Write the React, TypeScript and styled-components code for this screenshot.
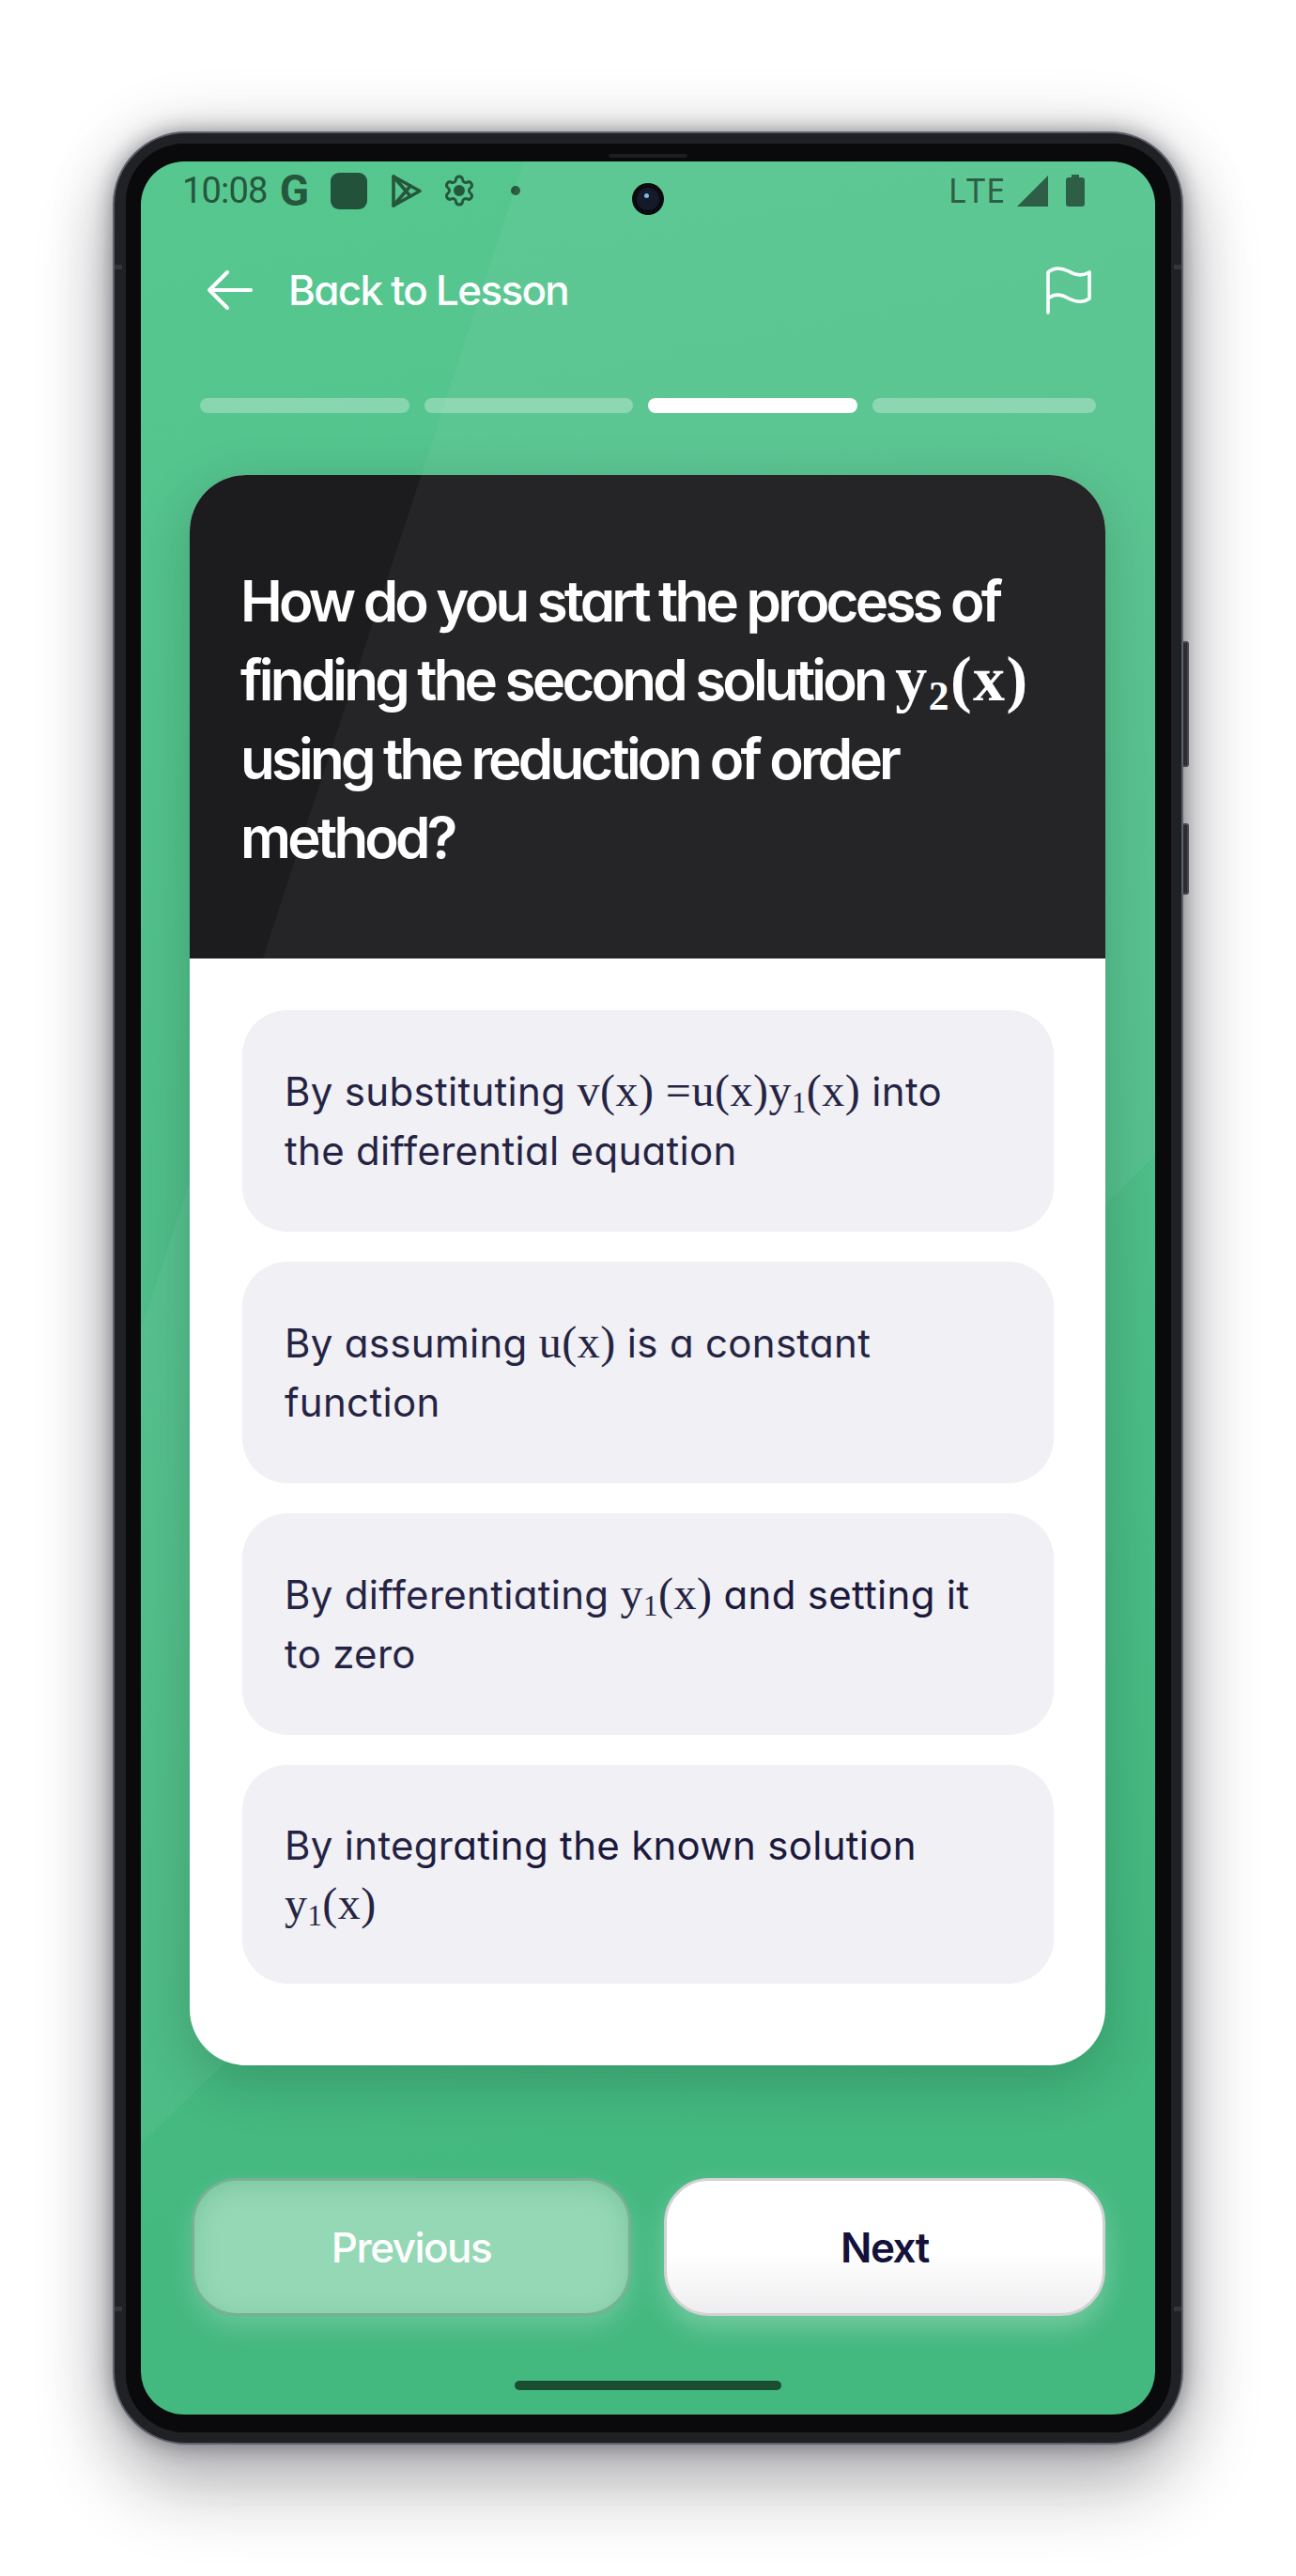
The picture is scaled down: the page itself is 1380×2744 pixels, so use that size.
import React from "react";
import styled, { createGlobalStyle } from "styled-components";
import { Settings } from "lucide-react";

const GlobalStyle = createGlobalStyle`
  html, body {
    margin: 0;
    padding: 0;
    background: #fff;
  }
  * {
    box-sizing: border-box;
  }
`;

const Page = styled.div`
  width: 1380px;
  height: 2744px;
  padding: 140px 120px 0;
  background: #fff;
  font-family: Inter, Lato, "Liberation Sans", sans-serif;
  font-feature-settings: "cv11" 1;
  overflow: hidden;
`;

const Phone = styled.div`
  position: relative;
  width: 1140px;
  height: 2464px;
  padding: 11px 11px 11px 12px;
  border-radius: 78px;
  background: #202125;
  border: 2px solid #5d606c;
  box-shadow: 0 0 22px rgba(20, 20, 30, 0.42), 0 0 70px rgba(20, 20, 30, 0.16), 0 44px 80px rgba(20, 20, 30, 0.3);
`;

const SideKey = styled.div<{ $top: number; $height: number }>`
  position: absolute;
  right: -8px;
  top: ${({ $top }) => $top}px;
  width: 6px;
  height: ${({ $height }) => $height}px;
  background: #2c2d33;
  border: 2px solid #45464f;
  border-left: none;
  border-radius: 0 3px 3px 0;
`;

const AntennaBand = styled.div<{ $side: "left" | "right"; $top: number }>`
  position: absolute;
  ${({ $side }) => $side}: 0;
  top: ${({ $top }) => $top}px;
  width: 8px;
  height: 5px;
  background: #34353b;
`;

const Bezel = styled.div`
  width: 100%;
  height: 100%;
  padding: 19px 17px 19px 16px;
  border-radius: 62px;
  background: #0a0a0c;
  position: relative;
`;

const Speaker = styled.div`
  position: absolute;
  top: 11px;
  left: 514px;
  width: 84px;
  height: 4px;
  border-radius: 2px;
  background: #1d1e22;
`;

const Screen = styled.div`
  position: relative;
  display: flex;
  flex-direction: column;
  width: 1080px;
  height: 2400px;
  border-radius: 46px;
  overflow: hidden;
  background: linear-gradient(168deg, #57c790 0%, #50bf8a 45%, #43b87f 85%);
`;

const Glare = styled.div`
  position: absolute;
  inset: 0;
  z-index: 3;
  pointer-events: none;
  background: rgba(255, 255, 255, 0.045);
  clip-path: polygon(408px 0, 1080px 0, 1080px 1059px, 0 2112px, 0 1245px);
`;

const StatusBar = styled.div`
  display: flex;
  align-items: center;
  height: 62px;
  padding: 0 75px 0 44px;
  color: #25573d;
`;

const Clock = styled.span`
  font-family: Roboto, sans-serif;
  font-size: 38px;
  font-weight: 400;
  letter-spacing: -0.8px;
  line-height: 1;
`;

const GoogleMark = styled.span`
  margin-left: 13px;
  font-family: Roboto, sans-serif;
  font-size: 46px;
  font-weight: 700;
  line-height: 1;
  width: 32px;
`;

const AppSquare = styled.div`
  margin-left: 22px;
  width: 39px;
  height: 39px;
  border-radius: 9px;
  background: #225239;
`;

const PlayIcon = styled.svg`
  margin-left: 25px;
  width: 34px;
  height: 37px;
`;

const GearIcon = styled(Settings)`
  margin-left: 21px;
  width: 36px;
  height: 36px;
  circle {
    fill: currentColor;
  }
`;

const NotifDot = styled.div`
  margin-left: 37px;
  width: 10px;
  height: 10px;
  border-radius: 50%;
  background: #25573d;
`;

const StatusRight = styled.div`
  display: flex;
  align-items: center;
  margin-left: auto;
`;

const Lte = styled.span`
  font-family: "Noto Sans", sans-serif;
  font-size: 36px;
  font-weight: 400;
  line-height: 1;
  letter-spacing: 1px;
`;

const SignalIcon = styled.svg`
  margin-left: 12px;
  width: 33px;
  height: 33px;
`;

const BatteryIcon = styled.svg`
  margin-left: 19px;
  width: 20px;
  height: 34px;
`;

const Camera = styled.div`
  position: absolute;
  left: 523px;
  top: 23px;
  width: 34px;
  height: 34px;
  border-radius: 50%;
  background: #0a0a10;
  display: flex;
  align-items: center;
  justify-content: center;
  z-index: 4;
`;

const CameraLens = styled.div`
  position: relative;
  width: 24px;
  height: 24px;
  border-radius: 50%;
  background: #141a2a;
`;

const CameraGlint = styled.div`
  position: absolute;
  left: 8px;
  top: 6px;
  width: 5px;
  height: 5px;
  border-radius: 50%;
  background: #7db8ec;
`;

const Header = styled.div`
  display: flex;
  align-items: center;
  height: 150px;
  padding: 0 67px 0 71px;
`;

const BackArrow = styled.svg`
  width: 48px;
  height: 42px;
`;

const BackText = styled.span`
  margin-left: 38px;
  color: #fff;
  font-size: 44px;
  font-weight: 500;
  letter-spacing: -1.7px;
  line-height: 1;
`;

const FlagIcon = styled.svg`
  margin-left: auto;
  width: 50px;
  height: 52px;
`;

const Progress = styled.div`
  display: grid;
  grid-template-columns: 223px 222px 223px 238px;
  column-gap: 16px;
  margin: 40px 0 0 63px;
`;

const ProgressSegment = styled.div<{ $active?: boolean }>`
  height: 16px;
  border-radius: 8px;
  background: ${({ $active }) => ($active ? "#fff" : "rgba(255, 255, 255, 0.3)")};
`;

const Card = styled.div`
  height: 1694px;
  margin: 66px 53px 0 52px;
  border-radius: 60px;
  overflow: hidden;
  background: #fff;
  box-shadow: 0 16px 60px rgba(0, 20, 10, 0.2);
`;

const Question = styled.div`
  height: 515px;
  padding: 92px 40px 0 54px;
  background: #1c1c1e;
`;

const QuestionText = styled.h1`
  margin: 0;
  color: #fff;
  font-size: 60px;
  font-weight: 600;
  line-height: 84px;
  letter-spacing: -3.8px;
  white-space: nowrap;
`;

const QuestionMath = styled.span`
  font-family: "Liberation Serif", serif;
  font-weight: 700;
  font-size: 68px;
  letter-spacing: 1.5px;
  line-height: 0;
`;

const Options = styled.div`
  display: flex;
  flex-direction: column;
  gap: 32px;
  padding: 55px 55px 0 56px;
`;

const Option = styled.div<{ $compact?: boolean }>`
  display: flex;
  align-items: center;
  height: ${({ $compact }) => ($compact ? 233 : 236)}px;
  padding: 0 45px;
  border-radius: 48px;
  background: #f0f0f5;
  color: #1c1a3c;
  font-size: 42px;
  line-height: 63px;
  letter-spacing: 0.3px;
  white-space: nowrap;
`;

const MathText = styled.span`
  font-family: "Liberation Serif", serif;
  font-size: 48px;
  line-height: 0;
  letter-spacing: 0.5px;
`;

const Sub = styled.sub`
  font-size: 0.64em;
  line-height: 0;
  vertical-align: -0.22em;
`;

const Actions = styled.div`
  display: grid;
  grid-template-columns: 468px 470px;
  column-gap: 35px;
  margin: 120px 0 0 54px;
`;

const ActionButton = styled.button<{ $primary?: boolean }>`
  height: 147px;
  border-radius: 48px;
  font-family: inherit;
  font-feature-settings: inherit;
  font-size: 44px;
  font-weight: ${({ $primary }) => ($primary ? 600 : 500)};
  letter-spacing: -1.5px;
  color: ${({ $primary }) => ($primary ? "#14123a" : "#fff")};
  border: 3px solid ${({ $primary }) => ($primary ? "#d2d2d2" : "rgba(100, 150, 125, 0.6)")};
  background: ${({ $primary }) =>
    $primary ? "linear-gradient(180deg, #fff 55%, #eeeef0 100%)" : "#95d8b5"};
  box-shadow: ${({ $primary }) =>
    $primary
      ? "0 12px 30px rgba(255, 255, 255, 0.28)"
      : "0 12px 30px rgba(255, 255, 255, 0.2), inset 0 6px 24px rgba(70, 170, 120, 0.35)"};
`;

const HomeBar = styled.div`
  align-self: center;
  width: 284px;
  height: 10px;
  margin-top: 69px;
  border-radius: 5px;
  background: #1b4d33;
`;

export default function App() {
  return (
    <>
      <GlobalStyle />
      <Page>
        <Phone>
          <SideKey $top={541} $height={134} />
          <SideKey $top={735} $height={76} />
          <AntennaBand $side="left" $top={140} />
          <AntennaBand $side="right" $top={140} />
          <AntennaBand $side="left" $top={2315} />
          <AntennaBand $side="right" $top={2315} />
          <Bezel>
            <Speaker />
            <Screen>
              <Glare />
              <Camera>
                <CameraLens>
                  <CameraGlint />
                </CameraLens>
              </Camera>
              <StatusBar>
                <Clock>10:08</Clock>
                <GoogleMark>G</GoogleMark>
                <AppSquare />
                <PlayIcon viewBox="0 0 34 37" fill="none" stroke="currentColor" strokeWidth="3.6" strokeLinejoin="round" strokeLinecap="round">
                  <path d="M3 3 L31 18.5 L3 34 Z" />
                  <path d="M3 3 L21 24 M3 34 L21 13" />
                </PlayIcon>
                <GearIcon />
                <NotifDot />
                <StatusRight>
                  <Lte>LTE</Lte>
                  <SignalIcon viewBox="0 0 33 33">
                    <polygon points="33,0 33,33 0,33" fill="currentColor" />
                  </SignalIcon>
                  <BatteryIcon viewBox="0 0 20 34">
                    <path d="M6 0 H14 V3 H17 Q20 3 20 6 V31 Q20 34 17 34 H3 Q0 34 0 31 V6 Q0 3 3 3 H6 Z" fill="currentColor" />
                  </BatteryIcon>
                </StatusRight>
              </StatusBar>
              <Header>
                <BackArrow viewBox="0 0 48 42" fill="none" stroke="#fff" strokeWidth="4" strokeLinecap="round" strokeLinejoin="round">
                  <path d="M46 21 H2 M21 2 L2 21 L21 40" />
                </BackArrow>
                <BackText>Back to Lesson</BackText>
                <FlagIcon viewBox="0 0 50 52" fill="none" stroke="#fff" strokeWidth="3.6" strokeLinecap="round" strokeLinejoin="round">
                  <path d="M3 50 V7 C9 2 17 2 25 6 C33 11 40 11 47 7 V35 C40 40 33 39 25 35 C17 30 9 30 3 35" />
                </FlagIcon>
              </Header>
              <Progress>
                <ProgressSegment />
                <ProgressSegment />
                <ProgressSegment $active />
                <ProgressSegment />
              </Progress>
              <Card>
                <Question>
                  <QuestionText>
                    How do you start the process of
                    <br />
                    finding the second solution{" "}
                    <QuestionMath>
                      y<Sub>2</Sub>(x)
                    </QuestionMath>
                    <br />
                    using the reduction of order
                    <br />
                    method?
                  </QuestionText>
                </Question>
                <Options>
                  <Option>
                    <div>
                      By substituting{" "}
                      <MathText>
                        v(x) =u(x)y<Sub>1</Sub>(x)
                      </MathText>{" "}
                      into
                      <br />
                      the differential equation
                    </div>
                  </Option>
                  <Option>
                    <div>
                      By assuming <MathText>u(x)</MathText> is a constant
                      <br />
                      function
                    </div>
                  </Option>
                  <Option>
                    <div>
                      By differentiating{" "}
                      <MathText>
                        y<Sub>1</Sub>(x)
                      </MathText>{" "}
                      and setting it
                      <br />
                      to zero
                    </div>
                  </Option>
                  <Option $compact>
                    <div>
                      By integrating the known solution
                      <br />
                      <MathText>
                        y<Sub>1</Sub>(x)
                      </MathText>
                    </div>
                  </Option>
                </Options>
              </Card>
              <Actions>
                <ActionButton>Previous</ActionButton>
                <ActionButton $primary>Next</ActionButton>
              </Actions>
              <HomeBar />
            </Screen>
          </Bezel>
        </Phone>
      </Page>
    </>
  );
}
